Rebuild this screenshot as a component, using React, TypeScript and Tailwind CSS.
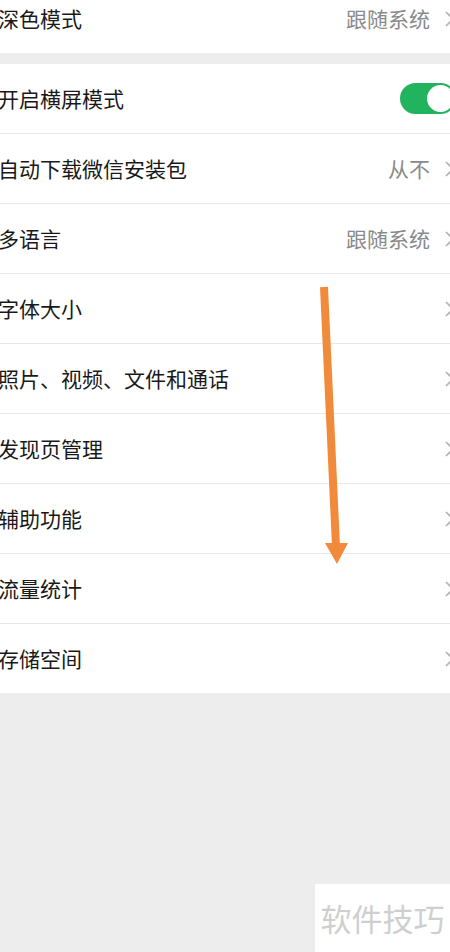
import React from "react";

const font = { fontFamily: '"Noto Sans CJK SC", "Noto Sans", sans-serif' };

function Chevron() {
  return (
    <svg width="12" height="20" viewBox="0 0 12 20" className="shrink-0">
      <path d="M2 3 L9 10 L2 17" fill="none" stroke="#b2b2b2" strokeWidth="1.6" />
    </svg>
  );
}

function Row({ label, value, last, chevron = true }: { label: string; value?: string; last?: boolean; chevron?: boolean }) {
  return (
    <div className={`flex items-center ${last ? "h-[69px]" : "h-[70px] border-b border-[#e8e8e8]"}`}>
      <span className="ml-[-2px] text-[21px] text-[#191919] flex-1 whitespace-nowrap">{label}</span>
      {value && <span className="text-[21px] text-[#8a8a8a] mr-[14px] whitespace-nowrap">{value}</span>}
      {chevron && <div className="mr-[-6px]"><Chevron /></div>}
    </div>
  );
}

export default function App() {
  return (
    <div style={font} className="relative w-[450px] h-[952px] bg-[#ededed] overflow-hidden">
      <div className="mt-[-16px] bg-white">
        <Row label="深色模式" value="跟随系统" last />
      </div>
      <div className="mt-[11px] bg-white">
        <div className="flex items-center h-[70px] border-b border-[#e8e8e8]">
          <span className="ml-[-2px] text-[21px] text-[#191919] flex-1">开启横屏模式</span>
          <div className="w-[56px] h-[31px] rounded-full bg-[#22b35e] mr-[-6px] flex items-center justify-end pr-[2px]">
            <div className="w-[27px] h-[27px] rounded-full bg-white" />
          </div>
        </div>
        <Row label="自动下载微信安装包" value="从不" />
        <Row label="多语言" value="跟随系统" />
        <Row label="字体大小" />
        <Row label="照片、视频、文件和通话" />
        <Row label="发现页管理" />
        <Row label="辅助功能" />
        <Row label="流量统计" />
        <Row label="存储空间" last />
      </div>
      <svg className="absolute left-0 top-0 pointer-events-none" width="450" height="952">
        <line x1="324" y1="287" x2="336" y2="546" stroke="#f18b3b" strokeWidth="8" strokeLinecap="butt" />
        <polygon points="325,543 348,543 337,564" fill="#f18b3b" />
      </svg>
      <div className="absolute right-0 bottom-0 w-[135px] h-[68px] bg-white flex items-center justify-center">
        <span className="text-[31px] text-[#cfcfcf]">软件技巧</span>
      </div>
    </div>
  );
}
